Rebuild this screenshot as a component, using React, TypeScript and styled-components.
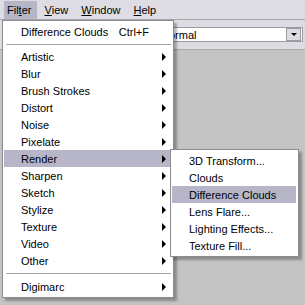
import styled, { createGlobalStyle } from 'styled-components';

const GlobalStyle = createGlobalStyle`
  html, body {
    margin: 0;
    padding: 0;
    width: 305px;
    height: 305px;
    overflow: hidden;
  }
  body {
    font-family: 'Liberation Sans', Arial, sans-serif;
    font-size: 11px;
    color: #000000;
  }
`;

const Screen = styled.div`
  position: relative;
  display: flex;
  flex-direction: column;
  width: 305px;
  height: 305px;
  background: #c3c3c3;
`;

const MenuBar = styled.div`
  display: flex;
  flex-direction: row;
  align-items: flex-start;
  gap: 4px;
  height: 20px;
  padding-left: 4px;
  box-sizing: border-box;
  background: #dedde4;
  border-bottom: 1px solid #a6a6ac;
`;

const MenuTitle = styled.div<{ $active?: boolean }>`
  display: flex;
  align-items: center;
  height: 18px;
  margin-top: 1px;
  padding: 0 6px 0 3px;
  background: ${(p) => (p.$active ? '#b7b6c8' : 'transparent')};
  white-space: nowrap;
`;

const Toolbar = styled.div`
  display: flex;
  flex-direction: row;
  align-items: flex-start;
  height: 30px;
  padding: 7px 2px 0 156px;
  box-sizing: border-box;
  background: #dcdce2;
  border-bottom: 1px solid #a8a8ae;
`;

const Field = styled.div`
  display: flex;
  flex-direction: row;
  align-items: center;
  flex: 1;
  height: 15px;
  padding-left: 4px;
  box-sizing: border-box;
  background: #ffffff;
  border: 1px solid #9a9aa0;
`;

const FieldText = styled.span`
  flex: 1;
`;

const DropButton = styled.div`
  display: flex;
  align-items: center;
  justify-content: center;
  width: 13px;
  height: 11px;
  margin-right: 1px;
  background: #dcdce2;
  border: 1px solid #9a9aa0;
`;

const DownArrow = styled.span`
  width: 0;
  height: 0;
  border-left: 3px solid transparent;
  border-right: 3px solid transparent;
  border-top: 3px solid #000000;
`;

const Workspace = styled.div`
  flex: 1;
  background: #c3c3c3;
`;

const Menu = styled.div<{ $left: number; $top: number; $width: number }>`
  position: absolute;
  left: ${(p) => p.$left}px;
  top: ${(p) => p.$top}px;
  width: ${(p) => p.$width}px;
  box-sizing: border-box;
  display: flex;
  flex-direction: column;
  padding: 2px 0;
  background: #ffffff;
  border: 1px solid #8c8c90;
  box-shadow: 3px 3px 2px rgba(0, 0, 0, 0.28);
`;

const Item = styled.div<{ $active?: boolean }>`
  display: flex;
  flex-direction: row;
  align-items: center;
  height: 17px;
  margin: 0 2px 0 1px;
  padding: 0 5px 0 17px;
  background: ${(p) => (p.$active ? '#b7b6c8' : 'transparent')};
  white-space: nowrap;
`;

const Label = styled.span`
  flex: 1;
`;

const Shortcut = styled.span`
  margin-right: 17px;
`;

const Arrow = styled.span`
  width: 0;
  height: 0;
  border-top: 4px solid transparent;
  border-bottom: 4px solid transparent;
  border-left: 4px solid #000000;
`;

const Separator = styled.div<{ $h: number }>`
  display: flex;
  align-items: center;
  height: ${(p) => p.$h}px;
  padding: 0 2px 0 3px;

  &::after {
    content: '';
    flex: 1;
    height: 1px;
    background: #a4a4a8;
  }
`;

const filters = [
  'Artistic',
  'Blur',
  'Brush Strokes',
  'Distort',
  'Noise',
  'Pixelate',
  'Render',
  'Sharpen',
  'Sketch',
  'Stylize',
  'Texture',
  'Video',
  'Other',
];

const renders = [
  '3D Transform...',
  'Clouds',
  'Difference Clouds',
  'Lens Flare...',
  'Lighting Effects...',
  'Texture Fill...',
];

export default function App() {
  return (
    <Screen>
      <GlobalStyle />
      <MenuBar>
        <MenuTitle $active>
          Fil<u>t</u>er
        </MenuTitle>
        <MenuTitle>
          <u>V</u>iew
        </MenuTitle>
        <MenuTitle>
          <u>W</u>indow
        </MenuTitle>
        <MenuTitle>
          <u>H</u>elp
        </MenuTitle>
      </MenuBar>
      <Toolbar>
        <Field>
          <FieldText>Normal</FieldText>
          <DropButton>
            <DownArrow />
          </DropButton>
        </Field>
      </Toolbar>
      <Workspace />

      <Menu $left={2} $top={20} $width={172}>
        <Item>
          <Label>Difference Clouds</Label>
          <Shortcut>Ctrl+F</Shortcut>
        </Item>
        <Separator $h={8} />
        {filters.map((f) => (
          <Item key={f} $active={f === 'Render'}>
            <Label>{f}</Label>
            <Arrow />
          </Item>
        ))}
        <Separator $h={9} />
        <Item>
          <Label>Digimarc</Label>
          <Arrow />
        </Item>
      </Menu>

      <Menu $left={170} $top={149} $width={129}>
        {renders.map((r) => (
          <Item key={r} $active={r === 'Difference Clouds'}>
            <Label>{r}</Label>
          </Item>
        ))}
      </Menu>
    </Screen>
  );
}
